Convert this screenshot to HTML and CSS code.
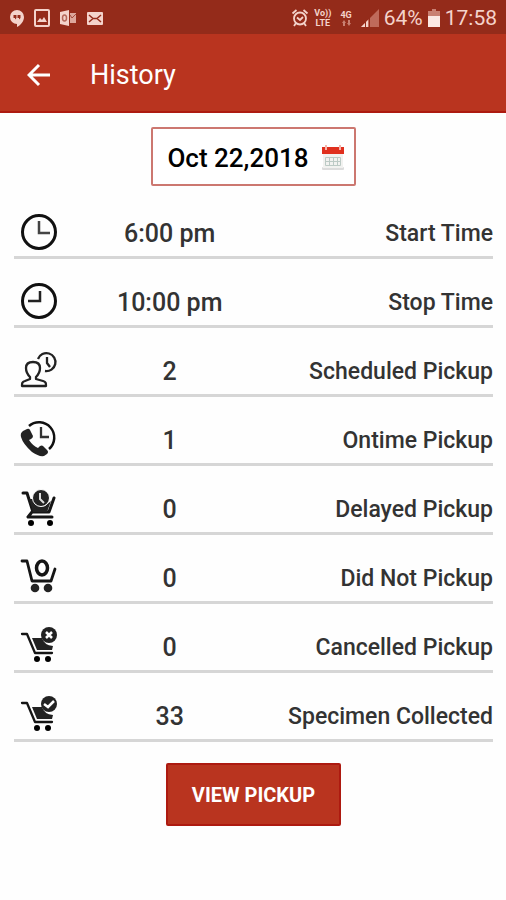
FILE: index.html
```html
<!DOCTYPE html>
<html lang="en">
<head>
<meta charset="utf-8">
<meta name="viewport" content="width=device-width, initial-scale=1">
<title>History</title>
<link rel="stylesheet" href="styles.css">
</head>
<body>
<div class="status">
  <div class="status-group notices">
    <svg width="16" height="18" viewBox="0 0 16 18"><path fill="#f4d3cb" d="M8 1a7 7 0 0 0 0 14v3c4-2 7-6 7-10a7 7 0 0 0-7-7z"/><path fill="#942b1a" d="M4.500 6h3v3L6 10.500V9H4.500zM8.500 6h3v3L10 10.500V9H8.500z"/></svg>
    <svg width="16" height="18" viewBox="0 0 16 18"><rect x="1" y="1" width="14" height="16" rx="1" fill="none" stroke="#f4d3cb" stroke-width="2"/><path fill="#f4d3cb" d="M3 13l3-4 2 2 2-3 3 5z"/></svg>
    <svg width="18" height="18" viewBox="0 0 18 18"><path fill="#f4d3cb" d="M1 3l9-2v16l-9-2z"/><path fill="#dda79b" d="M11 4h6v10h-6z"/><path fill="none" stroke="#a64a3a" d="M11 6l2 3 4-4"/><ellipse cx="5.500" cy="9" rx="2" ry="3" fill="none" stroke="#b5685a" stroke-width="1.500"/></svg>
    <svg width="18" height="18" viewBox="0 0 18 18"><rect x="1" y="3" width="16" height="13" rx="1" fill="#f4d3cb"/><path fill="none" stroke="#942b1a" stroke-width="1.500" d="M3 6l4 3.500h4L15 6M3 13l4-3.500M15 13l-4-3.500"/></svg>
  </div>
  <div class="status-group system">
    <svg width="18" height="20" viewBox="0 0 18 20"><g fill="none" stroke="#f4d3cb" stroke-width="1.800"><circle cx="9" cy="10.500" r="6"/><path d="M1.500 5.500l4-3.500M16.500 5.500l-4-3.500M5 15l-2 3M13 15l2 3M6 9.500l3 2.500 3-3"/></g></svg>
    <span class="stack volte"><span>Vo))</span><span>LTE</span></span>
    <span class="stack network"><span>4G</span>
      <svg width="10" height="6" viewBox="0 0 10 6"><path fill="#c98072" d="M3 0l2 3H4v3H2V3H1zM8 6L6 3h1V0h2v3h1z"/></svg>
    </span>
    <svg width="18" height="18" viewBox="0 0 18 18"><path fill="#bf6a5b" d="M0 18L18 0v18z"/><path fill="#f4d3cb" d="M0 18l7-7v7z"/><path stroke="#942b1a" d="M4.500 9v9M8.500 5v13"/></svg>
    <span class="reading">64%</span>
    <svg width="12" height="18" viewBox="0 0 12 18"><path fill="#c98072" d="M4 0h4v2h4v6H0V2h4z"/><path fill="#fbe8e3" d="M0 7h12v11H0z"/></svg>
    <span class="reading">17:58</span>
  </div>
</div>
<header class="bar">
  <button class="back" type="button" aria-label="Back">
    <svg width="24" height="24" viewBox="0 0 24 24"><path fill="none" stroke="#fff" stroke-width="3" d="M23 12H3M12 2L2 12l10 10"/></svg>
  </button>
  <h1 class="title">History</h1>
</header>
<main class="content">
  <button class="date" type="button">
    <span>Oct 22,2018</span>
    <svg width="24" height="26" viewBox="0 0 24 26"><rect x="1" y="22" width="22" height="3" rx="1" fill="#dcdcdc"/><path fill="#f2f2f0" d="M2 8h20v15H2z"/><path fill="#e0301e" d="M1 2h22v7H1z"/><path stroke="#f5b5ac" stroke-width="2" d="M5 0v5M19 0v5"/><path fill="none" stroke="#bccac5" d="M4.500 12.500h15v8h-15zM4.500 16.500h15M8.500 12v9M12.500 12v9M16.500 12v9"/></svg>
  </button>
  <table class="stats">
    <colgroup><col class="col-icon"><col class="col-value"><col></colgroup>
    <tbody>
    <tr>
      <td><svg class="icon" viewBox="0 0 38 38"><circle cx="19" cy="19" r="16.500" fill="none" stroke="#111" stroke-width="3"/><path fill="none" stroke="#444" stroke-width="2.500" d="M19 8v12h11"/></svg></td>
      <td class="value">6:00 pm</td><th scope="row">Start Time</th>
    </tr>
    <tr>
      <td><svg class="icon" viewBox="0 0 38 38"><circle cx="19" cy="19" r="16.500" fill="none" stroke="#111" stroke-width="3"/><path fill="none" stroke="#222" stroke-width="2.500" d="M20 9v10H8"/></svg></td>
      <td class="value">10:00 pm</td><th scope="row">Stop Time</th>
    </tr>
    <tr>
      <td><svg class="icon" viewBox="0 0 38 38"><g fill="none" stroke="#222" stroke-width="2.300"><path d="M10 26c-3-3-4-5-4-9 0-4 3-6 7-6s7 2 7 6c0 4-1 6-4 9v2l7 2c3 1 3 2 3 5H2c0-3 0-4 3-5l5-2z" stroke-linejoin="round"/><path d="M18 8a9 9 0 1 1 7 12"/><path d="M27 6v6l3 4"/></g></svg></td>
      <td class="value">2</td><th scope="row">Scheduled Pickup</th>
    </tr>
    <tr>
      <td><svg class="icon" viewBox="0 0 38 38"><path fill="none" stroke="#111" stroke-width="2.500" d="M9 6a15 15 0 1 1 20 23"/><path fill="none" stroke="#333" stroke-width="2.300" d="M21 7v10h8"/><path fill="#222" d="M3 11l4-2q2-1 3 1l3 6q0 2-2 3l-2 1q4 6 9 8l2-2q2-1 3 0l4 4q2 2 0 4l-3 2q-5 1-12-4Q3 24 1 17q-1-4 2-6z"/></svg></td>
      <td class="value">1</td><th scope="row">Ontime Pickup</th>
    </tr>
    <tr>
      <td><svg class="icon" viewBox="0 0 38 38"><path fill="none" stroke="#151515" stroke-width="3" stroke-linecap="round" stroke-linejoin="round" d="M3 4h4l6 19h16l5-14M12 23l-4 5h24"/><path fill="#222" d="M9 10h4q3 9 12 7l6-5-4 11H13z"/><circle cx="21" cy="9" r="8.500" fill="#222" stroke="#fff" stroke-width="1"/><path fill="none" stroke="#ddd" stroke-width="2" d="M20 4v6l4 4"/><circle cx="11" cy="34" r="3"/><circle cx="30" cy="34" r="3"/></svg></td>
      <td class="value">0</td><th scope="row">Delayed Pickup</th>
    </tr>
    <tr>
      <td><svg class="icon" viewBox="0 0 38 38"><path fill="none" stroke="#151515" stroke-width="2.800" stroke-linecap="round" stroke-linejoin="round" d="M2 3h5l5 20h19l4-12"/><ellipse cx="22" cy="10" rx="5.500" ry="7" fill="none" stroke="#151515" stroke-width="3.500"/><circle cx="15" cy="30" r="4.300" fill="#222"/><circle cx="28" cy="30" r="4.300" fill="#222"/></svg></td>
      <td class="value">0</td><th scope="row">Did Not Pickup</th>
    </tr>
    <tr>
      <td><svg class="icon" viewBox="0 0 38 38"><path fill="none" stroke="#151515" stroke-width="2.300" stroke-linecap="round" stroke-linejoin="round" d="M2 7h5l8 19h17"/><path fill="#222" d="M12 11h10q2 7 11 8l-1 4H17z"/><circle cx="29" cy="8" r="8" fill="#222"/><path stroke="#fff" stroke-width="2.500" d="M26 5l6 6M32 5l-6 6"/><circle cx="17" cy="32" r="3"/><circle cx="28" cy="32" r="3"/></svg></td>
      <td class="value">0</td><th scope="row">Cancelled Pickup</th>
    </tr>
    <tr>
      <td><svg class="icon" viewBox="0 0 38 38"><path fill="none" stroke="#151515" stroke-width="2.300" stroke-linecap="round" stroke-linejoin="round" d="M2 7h5l8 19h17"/><path fill="#222" d="M12 11h10q2 7 11 8l-1 4H17z"/><circle cx="29" cy="8" r="8" fill="#222"/><path fill="none" stroke="#fff" stroke-width="2.500" d="M24 8l4 3 6-6"/><circle cx="17" cy="32" r="3"/><circle cx="28" cy="32" r="3"/></svg></td>
      <td class="value">33</td><th scope="row">Specimen Collected</th>
    </tr>
    </tbody>
  </table>
  <button class="view" type="button">VIEW PICKUP</button>
</main>
</body>
</html>
```
FILE: styles.css
```css
* { box-sizing: border-box; }
body {
  margin: 0;
  background: #fefefe;
  color: #333;
  font-family: Roboto, "Liberation Sans", sans-serif;
}
button { font-family: inherit; cursor: pointer; }
svg { display: block; flex: none; }
.status {
  display: flex;
  align-items: center;
  justify-content: space-between;
  height: 34px;
  padding: 2px 9px 0;
  background: #942b1a;
  color: #f4d3cb;
}
.status-group { display: flex; align-items: center; }
.notices { gap: 9px; }
.system { gap: 5px; }
.reading { font-size: 21px; }
.stack {
  display: flex;
  flex-direction: column;
  align-items: center;
  font-size: 9px;
  font-weight: 700;
  line-height: 10px;
}
.network { margin: 0 4px; }
.bar {
  display: flex;
  align-items: center;
  gap: 36px;
  height: 79px;
  padding: 4px 24px 0;
  background: #b9341f;
  border-bottom: 2px solid #ad1a10;
  color: #fff;
}
.back { padding: 0 3px; border: 0; background: none; }
.title { margin: 0; font-size: 27px; font-weight: 400; }
.content {
  display: flex;
  flex-direction: column;
  align-items: center;
  padding: 14px 13px 24px 14px;
}
.date {
  display: flex;
  align-items: center;
  gap: 12px;
  height: 59px;
  padding: 3px 9px 0 14px;
  border: 2px solid #cc7770;
  border-radius: 2px;
  background: #fff;
  color: #000;
  font-size: 26px;
  font-weight: 500;
}
.stats {
  width: 100%;
  margin-top: 4px;
  border-collapse: separate;
  border-spacing: 0;
  table-layout: fixed;
}
.col-icon { width: 11%; }
.col-value { width: 43%; }
.stats td, .stats th {
  height: 69px;
  padding: 18px 0 0;
  border-bottom: 3px solid #d6d6d6;
  vertical-align: middle;
}
.stats .value, .stats th { padding-top: 20px; font-weight: 500; }
.icon { width: 38px; height: 38px; margin-left: 6px; }
.stats .value { font-size: 25px; text-align: center; }
.stats th { font-size: 23px; text-align: right; white-space: nowrap; }
.view {
  height: 63px;
  margin-top: 21px;
  padding: 0 24px;
  border: 2px solid #ad1a10;
  border-radius: 2px;
  background: #b9341f;
  color: #fff;
  font-size: 20px;
  font-weight: 700;
}
```
